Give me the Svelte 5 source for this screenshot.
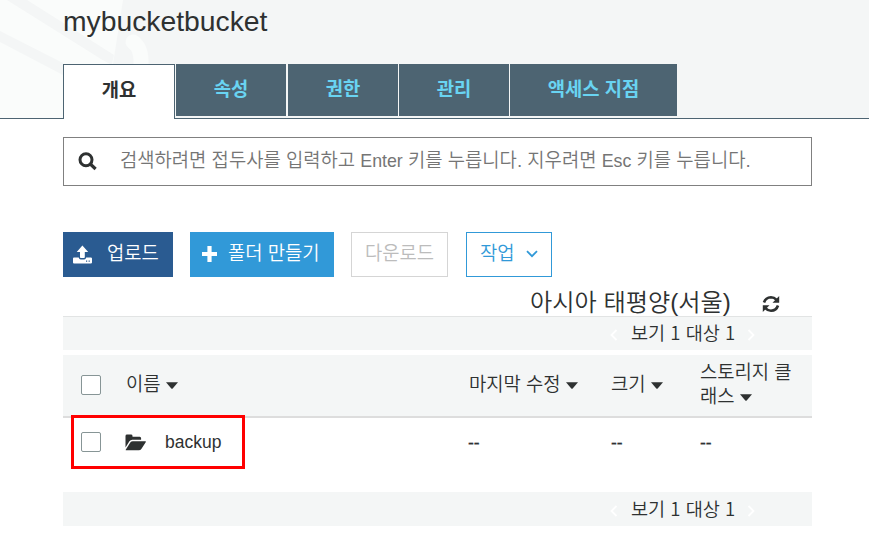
<script>
  const tabs = [
    { label: '속성', width: 110, gap: 1 },
    { label: '권한', width: 110, gap: 2 },
    { label: '관리', width: 110, gap: 1 },
    { label: '액세스 지점', width: 167, gap: 1 }
  ];
</script>

{#snippet caret()}
  <svg class="caret" width="12" height="7" viewBox="0 0 12 7"><path d="M0 .3h12L6.7 6.5q-.7.6-1.4 0z" fill="currentColor" /></svg>
{/snippet}

{#snippet pager()}
  <svg width="8" height="12" viewBox="0 0 8 12"><path d="M6.5 1L1.5 6l5 5" fill="none" stroke="#fff" stroke-width="1.8" /></svg>
  <span class="count">보기 1 대상 1</span>
  <svg width="8" height="12" viewBox="0 0 8 12"><path d="M1.5 1l5 5-5 5" fill="none" stroke="#fff" stroke-width="1.8" /></svg>
{/snippet}

<div class="page">
  <header>
    <svg class="art" width="160" height="118" viewBox="0 0 160 118">
      <path d="M0 0H123L113 64V118H0Z" fill="#fafcfb" />
      <path d="M7 0H27L114 55L112 64H110L101 59ZM0 31L63 63V75L0 42Z" fill="#f4f6f6" />
      <path d="M133 42Q142 48 141 66" fill="none" stroke="#fafcfb" stroke-width="15" stroke-linecap="round" />
    </svg>
    <h1>mybucketbucket</h1>
    <nav>
      <div class="tab active"><span>개요</span></div>
      {#each tabs as tab}
        <div class="tab" style="width:{tab.width}px;margin-left:{tab.gap}px"><span>{tab.label}</span></div>
      {/each}
    </nav>
  </header>

  <main>
    <div class="search">
      <svg width="20" height="19" viewBox="0 0 20 19"><circle cx="8" cy="7.7" r="6" fill="none" stroke="#2e3131" stroke-width="3" /><path d="M12.3 12l5.3 5" stroke="#2e3131" stroke-width="3.2" /></svg>
      <span>검색하려면 접두사를 입력하고 <i>Enter</i> 키를 누릅니다. 지우려면 <i>Esc</i> 키를 누릅니다.</span>
    </div>

    <div class="actions">
      <div class="btn upload">
        <svg width="19" height="19" viewBox="0 0 19 19"><path d="M9.4.5L3.7 7H7v5.2q0 .8.8.8H11q.8 0 .8-.8V7h3.4z" fill="#fff" /><path fill-rule="evenodd" d="M1 12.5h4.7q.5 2 2 2h3.5q1.5 0 2-2h4.6q1.2 0 1.2 1v4q0 1-1.2 1H1q-1 0-1-1v-4q0-1 1-1zm12 3v1.2h1.2v-1.2zm2.6 0v1.2h1.2v-1.2z" fill="#fff" /></svg>
        <span>업로드</span>
      </div>
      <div class="btn create">
        <svg width="15" height="16" viewBox="0 0 15 16"><path d="M7.5 2.1v11.8M2.1 8h10.8" stroke="#fff" stroke-width="4.2" stroke-linecap="square" /></svg>
        <span>폴더 만들기</span>
      </div>
      <div class="btn download"><span>다운로드</span></div>
      <div class="btn more">
        <span>작업</span>
        <svg width="12" height="8" viewBox="0 0 12 8"><path d="M1 1.2l5 5 5-5" fill="none" stroke="#3199d8" stroke-width="1.8" /></svg>
      </div>
    </div>

    <div class="region">
      <span>아시아 태평양(서울)</span>
      <svg width="18" height="18" viewBox="0 0 18 18"><path d="M2 7.5Q3.6 2.5 9 2.3q3.2 0 5.3 2.4M16 10.5Q14.4 15.5 9 15.7q-3.2 0-5.3-2.4" fill="none" stroke="#2e3131" stroke-width="2.6" /><path d="M17.2 1v6.7h-6.7zM.8 17v-6.7h6.7z" fill="#2e3131" /></svg>
    </div>

    <div class="bar top">{@render pager()}</div>

    <div class="row head">
      <div class="check"></div>
      <div class="name">이름{@render caret()}</div>
      <div class="date">마지막 수정{@render caret()}</div>
      <div class="size">크기{@render caret()}</div>
      <div class="storage">스토리지 클<br />래스{@render caret()}</div>
    </div>
    <div class="row item">
      <div class="check"></div>
      <div class="name">
        <svg width="21" height="17" viewBox="0 0 21 17"><path d="M.5 13.5V2Q.5.6 2 .6h4Q7.5.6 7.5 2v.7h7.2q1.4 0 1.4 1.5v1.6H7.2Q5.5 5.8 4.4 7.3z" fill="#2e3131" /><path d="M.7 15.7L5.3 8.6Q6.2 7.2 7.8 7.2h12.5q1 0 .4 1l-4.2 6.5q-1 1.5-2.8 1.5H1.3q-.8 0-.6-.5z" fill="#2e3131" /></svg>
        <span>backup</span>
      </div>
      <div class="date dash">--</div>
      <div class="size dash">--</div>
      <div class="storage dash">--</div>
      <div class="highlight"></div>
    </div>

    <div class="bar bottom">{@render pager()}</div>
  </main>
</div>

<style>
  .page {
    width: 869px;
    height: 544px;
    overflow: hidden;
    background: #fff;
    color: #2e3131;
    font: 350 18.8px/24px 'Liberation Sans', 'Noto Sans CJK KR', sans-serif;
  }
  .page :global(*) { box-sizing: border-box; }
  span, .name, .date, .size, .storage { white-space: nowrap; }
  svg { display: block; flex: none; }
  header {
    position: relative;
    height: 119px;
    padding-left: 63px;
    background: #f4f6f6;
    border-bottom: 1px solid #4d6472;
  }
  .art { position: absolute; left: 0; top: 0; }
  h1 {
    position: relative;
    margin: 0;
    height: 64px;
    padding-top: 5px;
    font-size: 28.3px;
    line-height: 32px;
    font-weight: 400;
  }
  nav { position: relative; display: flex; align-items: flex-start; }
  .tab {
    height: 52px;
    display: flex;
    justify-content: center;
    padding-top: 14px;
    background: #4d6472;
    color: #69d4f2;
    font-weight: 700;
  }
  .active {
    width: 112px;
    height: 55px;
    background: #fff;
    color: #2e3131;
    border: 1px solid #4d6472;
    border-bottom: 0;
  }
  main { width: 749px; margin-left: 63px; }
  .search {
    height: 49px;
    margin-top: 18px;
    padding: 0 0 2px 14px;
    display: flex;
    align-items: center;
    border: 1px solid #808080;
    color: #757575;
  }
  .search span { margin-left: 22px; }
  .search svg { margin-top: 2px; }
  i { font-style: normal; font-size: 17.8px; }
  .actions { display: flex; margin-top: 46px; }
  .btn { height: 45px; display: flex; align-items: center; }
  .btn span { margin-top: -1px; }
  .btn svg { margin-top: -1px; }
  .upload { width: 110px; padding-left: 10px; background: #2a5b91; color: #fff; }
  .upload span { margin-left: 15px; }
  .create { width: 144px; margin-left: 17px; padding-left: 12px; background: #3199d8; color: #fff; }
  .create svg { margin-top: -2px; }
  .create span { margin-left: 11px; }
  .download { width: 97px; margin-left: 17px; justify-content: center; border: 1px solid #d5d5d5; color: #bcbcbc; }
  .more { width: 86px; margin-left: 18px; padding-left: 13px; border: 1px solid #3199d8; color: #3199d8; }
  .more svg { margin-left: 11px; }
  .region {
    height: 39px;
    padding: 12px 0 0 467px;
    display: flex;
    font-size: 24.2px;
    line-height: 28px;
  }
  .region svg { position: relative; margin: 6px 0 0 31px; }
  .bar {
    height: 34px;
    padding-left: 547px;
    display: flex;
    align-items: center;
    background: #f4f6f6;
  }
  .top { border-top: 1px solid #e2e4e4; }
  .count {
    width: 104px;
    margin: -3px 12px 0 13px;
    font-family: 'Noto Sans CJK KR', sans-serif;
    font-size: 18.6px;
    word-spacing: 1px;
  }
  .bar svg { margin-top: 3px; }
  .row { position: relative; display: flex; align-items: center; }
  .head { height: 63px; margin-top: 5px; background: #f4f6f6; border-bottom: 2px solid #ddd; padding-bottom: 2px; }
  .check {
    width: 20px;
    height: 20px;
    margin-left: 18px;
    border: 1px solid #879596;
    border-radius: 2px;
    background: #fff;
  }
  .head .check { margin-top: 1px; }
  .caret { display: inline-block; margin-left: 5px; vertical-align: 2px; }
  .name { width: 343px; padding-left: 25px; }
  .date { width: 142px; padding-left: 25px; }
  .size { width: 89px; padding-left: 25px; }
  .storage { padding-left: 25px; }
  .item { height: 48px; font-size: 17.5px; font-weight: 400; }
  .item .name { padding-left: 24px; display: flex; align-items: center; }
  .item .name span { margin-left: 19px; }
  .item .date { padding-left: 24px; }
  .dash { padding-top: 2px; -webkit-text-stroke: .3px #2e3131; }
  .highlight {
    position: absolute;
    left: 8px;
    top: -3px;
    width: 174px;
    height: 54px;
    border: 3px solid #f00;
  }
  .bottom { margin-top: 26px; }
</style>
